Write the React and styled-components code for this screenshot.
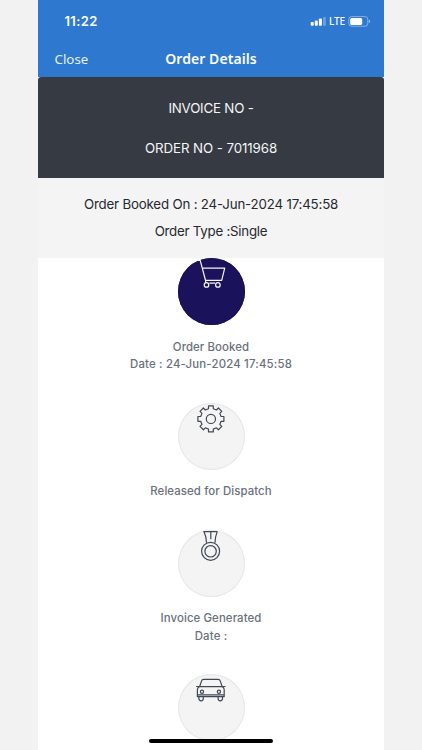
import React from 'react';
import styled, { createGlobalStyle } from 'styled-components';

const GlobalStyle = createGlobalStyle`
  * {
    box-sizing: border-box;
  }

  body {
    margin: 0;
    background-color: #f2f2f2;
    font-family: Inter, "Liberation Sans", sans-serif;
    overflow: hidden;
  }
`;

const Screen = styled.div`
  position: relative;
  width: 346px;
  height: 750px;
  margin: 0 auto;
  overflow: hidden;
  background-color: #ffffff;
`;

const Header = styled.header`
  height: 77px;
  background-color: #2e78d0;
  color: #ffffff;
`;

const StatusBar = styled.div`
  display: flex;
  align-items: center;
  justify-content: space-between;
  height: 42px;
  padding: 0 13px 0 26.5px;
`;

const Time = styled.span`
  font-size: 13px;
  font-weight: 600;
  letter-spacing: 0.35px;
`;

const StatusIcons = styled.div`
  display: flex;
  align-items: center;
  gap: 3px;
`;

const Network = styled.span`
  font-family: "Noto Sans", sans-serif;
  font-size: 10px;
  line-height: 12px;
  font-weight: 500;
  letter-spacing: -0.15px;
`;

const NavBar = styled.nav`
  display: grid;
  grid-template-columns: 1fr auto 1fr;
  align-items: center;
  height: 33px;
  padding: 0 16.5px;
  font-family: "Noto Sans", sans-serif;
`;

const CloseButton = styled.button`
  justify-self: start;
  padding: 0;
  border: none;
  background: none;
  color: #e4f0fd;
  font-family: inherit;
  font-size: 13.3px;
  cursor: pointer;
`;

const Title = styled.h1`
  margin: 0;
  font-size: 14px;
  font-weight: 600;
  letter-spacing: 0.08px;
`;

const InvoiceCard = styled.section`
  display: flex;
  flex-direction: column;
  align-items: center;
  gap: 20px;
  height: 101px;
  padding-top: 21px;
  border-radius: 3px 3px 0 0;
  background-color: #363a42;
  color: #f4f5f6;
  font-size: 13.3px;
  line-height: 20px;
`;

const Summary = styled.section`
  display: flex;
  flex-direction: column;
  align-items: center;
  gap: 7px;
  height: 80px;
  padding-top: 16.4px;
  background-color: #f4f4f4;
  color: #26292e;
  font-size: 13.3px;
  line-height: 20px;
`;

const Line = styled.div`
  white-space: nowrap;
  letter-spacing: ${(props) => props.$spacing || 0}px;
`;

const Steps = styled.div`
  display: flex;
  flex-direction: column;
`;

const Step = styled.div`
  display: flex;
  flex-direction: column;
  align-items: center;
  height: ${(props) => props.$height}px;
`;

const StepCircle = styled.div`
  flex: none;
  width: 67px;
  height: 67px;
  margin-bottom: 13.5px;
  border-radius: 50%;
  background-color: ${(props) => (props.$active ? '#1a125b' : '#f4f4f4')};
  box-shadow: inset 0 0 0 1px ${(props) => (props.$active ? '#1a125b' : '#e6e7ea')};
  color: ${(props) => (props.$active ? '#f5f5fa' : '#424754')};
`;

const StepIcon = styled.svg.attrs({ viewBox: '0.6 0 67 67' })`
  display: block;
  width: 67px;
  height: 67px;
  fill: none;
  stroke: currentColor;
  stroke-width: 1.2;
  stroke-linejoin: round;
`;

const StepText = styled.div`
  color: #69717c;
  font-size: 11.4px;
  font-weight: 500;
  line-height: 17.6px;
  white-space: nowrap;
  letter-spacing: ${(props) => props.$spacing || 0.1}px;
`;

const HomeIndicator = styled.div`
  position: absolute;
  bottom: 7px;
  left: 111px;
  width: 124px;
  height: 4.5px;
  border-radius: 3px;
  background-color: #000000;
`;

const CartIcon = () => (
  <StepIcon>
    <path d="M18 2.3h4.8L28.3 23" />
    <path d="M25.3 10.2h22l-3 12.2H28" />
    <path d="M28.2 22.4v2.4M32 25.2h5.8" />
    <circle cx="29.1" cy="26.9" r="2.3" />
    <circle cx="40.5" cy="26.9" r="2.3" />
  </StepIcon>
);

const GEAR_TOOTH = [
  [-2.4, -10.2],
  [-2.4, -13],
  [2.4, -13],
  [2.4, -10.2],
];

// the gear outline is one tooth turned around the centre eight times
const gearPoints = Array.from({ length: 8 }, (_, i) => {
  const angle = (i * Math.PI) / 4;
  return GEAR_TOOTH
    .map(([x, y]) => [
      x * Math.cos(angle) - y * Math.sin(angle),
      x * Math.sin(angle) + y * Math.cos(angle),
    ].map((n) => n.toFixed(2)).join(','))
    .join(' ');
}).join(' ');

const GearIcon = () => (
  <StepIcon>
    <g transform="translate(33.5 15.9)">
      <polygon points={gearPoints} />
      <circle r="4.6" />
    </g>
  </StepIcon>
);

const MedalIcon = () => (
  <StepIcon>
    <path d="M29.1 12.7c0-3.8-1-7.6-2.6-11.1h13.3c-1.4 3.5-2.2 7.3-2.2 11.1M33.4 1.6v7.6" />
    <circle cx="33.2" cy="21.3" r="9" />
    <circle cx="33.2" cy="21.3" r="5.7" />
  </StepIcon>
);

const CarIcon = () => (
  <StepIcon>
    <path d="M22.2 12.7l1.9-5.6q.5-1.7 2.2-1.7h14.4q1.7 0 2.2 1.7l1.9 5.6" />
    <path d="M18.7 12.5h3.1M44.9 12.5h3.2M22 12.7h22.8q2 .8 2 3v7H20v-7q0-2.2 2-3zM20 20.8h26.8" />
    <path d="M21.5 22.7v1.9a2.2 2.2 0 0 0 4.4 0v-1.9M40.7 22.7v1.9a2.2 2.2 0 0 0 4.4 0v-1.9" />
    <circle cx="24.6" cy="17.7" r="1.6" />
    <circle cx="41.5" cy="17.7" r="1.6" />
  </StepIcon>
);

const steps = [
  { icon: CartIcon, title: 'Order Booked', date: 'Date : 24-Jun-2024 17:45:58', height: 144.5, active: true },
  { icon: GearIcon, title: 'Released for Dispatch', height: 127.3 },
  { icon: MedalIcon, title: 'Invoice Generated', date: 'Date :', height: 144.2 },
  { icon: CarIcon, height: 80 },
];

function SignalIcon() {
  return (
    <svg width="16" height="9" viewBox="0 0 16 9" fill="#ffffff">
      <rect x="0.7" y="5" width="3" height="3.8" rx="0.8" />
      <rect x="4.8" y="3.5" width="3" height="5.3" rx="0.8" />
      <rect x="8.9" y="1.4" width="3" height="7.4" rx="0.8" />
      <rect x="13" y="0" width="2.8" height="8.8" rx="0.8" opacity="0.3" />
    </svg>
  );
}

function BatteryIcon() {
  return (
    <svg width="23" height="11" viewBox="0 0 23 11" fill="#ffffff">
      <rect x="0.8" y="0.6" width="19" height="9.6" rx="2.8" fill="none" stroke="#ffffff" opacity="0.42" />
      <rect x="2.2" y="1.9" width="12" height="7" rx="1.5" />
      <path d="M20.8 3.7q1.4.4 1.4 1.7t-1.4 1.7z" opacity="0.5" />
    </svg>
  );
}

function App() {
  return (
    <>
      <GlobalStyle />
      <Screen>
        <Header>
          <StatusBar>
            <Time>11:22</Time>
            <StatusIcons>
              <SignalIcon />
              <Network>LTE</Network>
              <BatteryIcon />
            </StatusIcons>
          </StatusBar>
          <NavBar>
            <CloseButton type="button">Close</CloseButton>
            <Title>Order Details</Title>
          </NavBar>
        </Header>

        <InvoiceCard>
          <Line $spacing={-0.2}>INVOICE NO -</Line>
          <Line $spacing={-0.08}>ORDER NO - 7011968</Line>
        </InvoiceCard>

        <Summary>
          <Line $spacing={-0.18}>Order Booked On : 24-Jun-2024 17:45:58</Line>
          <Line $spacing={-0.24}>Order Type :Single</Line>
        </Summary>

        <Steps>
          {steps.map(({ icon: Icon, title, date, height, active }, index) => (
            <Step key={index} $height={height}>
              <StepCircle $active={active}>
                <Icon />
              </StepCircle>
              {title && <StepText>{title}</StepText>}
              {date && <StepText $spacing={0.18}>{date}</StepText>}
            </Step>
          ))}
        </Steps>

        <HomeIndicator />
      </Screen>
    </>
  );
}

export default App;
